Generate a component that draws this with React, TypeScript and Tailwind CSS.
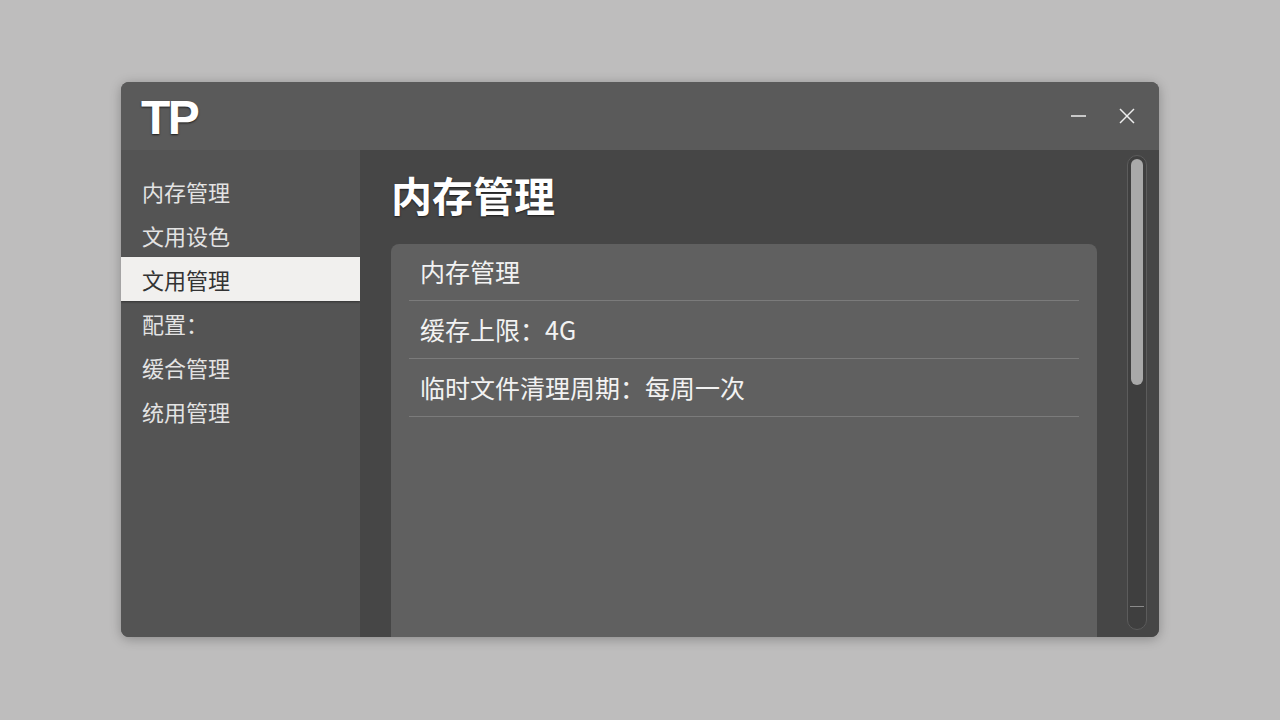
import React from "react";

const navItems = ["内存管理", "文用设色", "文用管理", "配置：", "缓合管理", "统用管理"];
const activeIndex = 2;

const rows = ["内存管理", "缓存上限：4G", "临时文件清理周期：每周一次"];

const font = {
  fontFamily: '"Noto Sans CJK SC", "Noto Sans", sans-serif',
};

function WindowControls() {
  return (
    <div className="flex items-center gap-[26px] pr-[21px]">
      <svg width="22" height="22" viewBox="0 0 22 22">
        <line x1="3" y1="11" x2="18" y2="11" stroke="#eeeeee" strokeWidth="1.5" />
      </svg>
      <svg width="22" height="22" viewBox="0 0 22 22">
        <line x1="4" y1="4" x2="18" y2="18" stroke="#eeeeee" strokeWidth="1.5" />
        <line x1="18" y1="4" x2="4" y2="18" stroke="#eeeeee" strokeWidth="1.5" />
      </svg>
    </div>
  );
}

function Scrollbar() {
  return (
    <div className="flex w-[32px] shrink-0 flex-col pt-[5px] pb-[7px]">
      <div className="relative flex h-full w-[20px] flex-col rounded-full border border-[#5c5c5c] bg-[#3f3f3f] p-[3px]">
        <div className="h-[226px] w-full rounded-full bg-[#a9a9a9]" />
        <div className="absolute bottom-[22px] left-[2px] right-[2px] h-px bg-[#8a8a8a]" />
      </div>
    </div>
  );
}

export default function App() {
  return (
    <div className="h-[720px] w-[1280px] bg-[#bebdbd] pl-[121px] pt-[82px]" style={font}>
      <div className="flex h-[555px] w-[1038px] flex-col overflow-hidden rounded-[8px] bg-[#565656] shadow-[0_2px_12px_rgba(0,0,0,0.28)]">
        {/* title bar */}
        <div className="flex h-[68px] shrink-0 items-center justify-between bg-[#5a5a5a]">
          <div
            className="pl-[20px] pt-[4px] text-[48px] font-bold leading-none tracking-[-2.5px] text-white [text-shadow:0_1px_2px_rgba(0,0,0,0.7)]"
            style={{ fontFamily: '"Liberation Sans", Arial, sans-serif' }}
          >
            TP
          </div>
          <WindowControls />
        </div>

        <div className="flex min-h-0 flex-1">
          {/* sidebar */}
          <nav className="flex w-[239px] shrink-0 flex-col bg-[#545454] pt-[19px]">
            {navItems.map((item, i) => (
              <div
                key={i}
                className={
                  i === activeIndex
                    ? "flex h-[44px] items-center bg-[#f1f0ee] pl-[21px] text-[22px] text-[#333333] shadow-[0_1px_2px_rgba(0,0,0,0.4)]"
                    : "flex h-[44px] items-center pl-[21px] text-[22px] text-[#e3e3e3]"
                }
              >
                {item}
              </div>
            ))}
          </nav>

          {/* content */}
          <div className="flex min-w-0 flex-1 bg-[#464646]">
            <div className="flex min-w-0 flex-1 flex-col pl-[31px] pr-[30px]">
              <h1 className="flex h-[94px] shrink-0 items-center pb-[4px] text-[41px] font-bold text-white [text-shadow:0_1px_2px_rgba(0,0,0,0.6)]">
                内存管理
              </h1>
              <div className="flex-1 rounded-t-[8px] bg-[#606060] px-[18px]">
                {rows.map((row, i) => (
                  <div
                    key={i}
                    className={
                      i === 0
                        ? "flex h-[57px] items-center border-b border-[#7b7b7b] pl-[11px] text-[25px] text-[#f2f2f2]"
                        : "flex h-[58px] items-center border-b border-[#7b7b7b] pl-[11px] text-[25px] text-[#f2f2f2]"
                    }
                  >
                    {row}
                  </div>
                ))}
              </div>
            </div>
            <Scrollbar />
          </div>
        </div>
      </div>
    </div>
  );
}
